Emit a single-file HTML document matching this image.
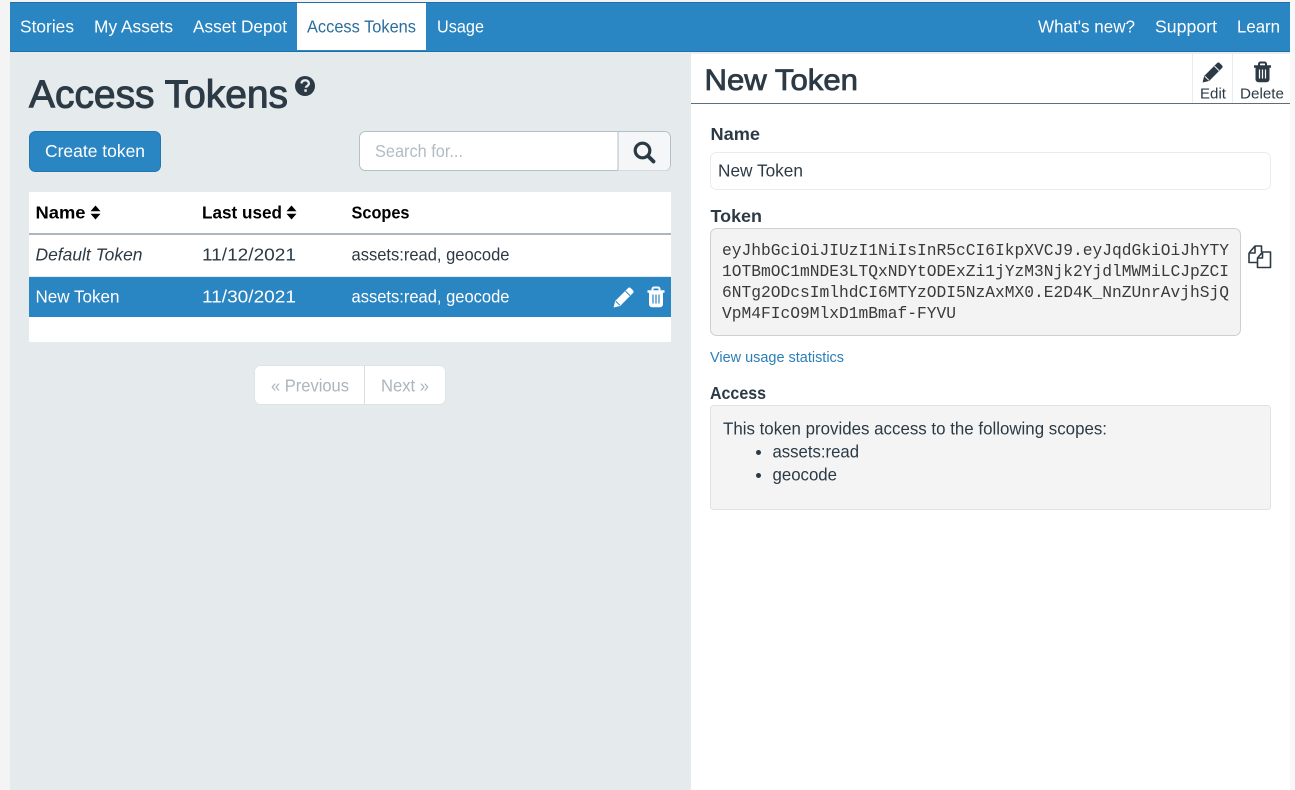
<!DOCTYPE html>
<html lang="en">
<head>
<meta charset="utf-8">
<title>Access Tokens</title>
<style>
html,body{margin:0;padding:0;width:1295px;height:790px;overflow:hidden;background:#f4f4f4}
svg{display:block}
text{font-family:"Liberation Sans",sans-serif;font-size:17.5px;fill:#2c3a45}
.n{fill:#fff}
.h{font-weight:bold;fill:#000}
.l{font-weight:bold;fill:#2c3a45;stroke:none}
.m{font-family:"Liberation Mono",monospace;font-size:16.25px;fill:#3a3a3a}
</style>
</head>
<body>
<svg width="1295" height="790" viewBox="0 0 1295 790" xmlns="http://www.w3.org/2000/svg">
<defs>
<g id="pencil"><path d="M1 23l1.600-6.600L16.400 2.600a2 2 0 0 1 2.800 0l2.200 2.200a2 2 0 0 1 0 2.800L7.600 21.400z"/></g>
<g id="sort"><path d="M5.500 0l5 5.800H.5zM.5 8.200h10l-5 5.800z"/></g>
</defs>

<!-- backgrounds -->
<rect x="0" y="0" width="1295" height="790" fill="#f4f4f4"/>
<rect x="10" y="52" width="681" height="738" fill="#e5eaed"/>
<rect x="691" y="52" width="599" height="738" fill="#fff"/>
<rect x="691" y="52" width="599" height="2" fill="#e9edef"/>
<rect x="1290" y="0" width="5" height="790" fill="#f8f8f8"/>

<!-- nav -->
<rect x="10" y="2" width="1280" height="50" fill="#2a85c3"/>
<rect x="10" y="2" width="1280" height="1" fill="#1f6fa8"/>
<rect x="10" y="51" width="1280" height="1" fill="#1f6fa8"/>
<rect x="297" y="3" width="129" height="47" fill="#fff"/>
<text class="n" x="20" y="32.500" textLength="54" lengthAdjust="spacingAndGlyphs">Stories</text>
<text class="n" x="94" y="32.500" textLength="79" lengthAdjust="spacingAndGlyphs">My Assets</text>
<text class="n" x="193" y="32.500" textLength="94" lengthAdjust="spacingAndGlyphs">Asset Depot</text>
<text x="307" y="32.500" textLength="109" lengthAdjust="spacingAndGlyphs" style="fill:#2a6d9c">Access Tokens</text>
<text class="n" x="437" y="32.500" textLength="47" lengthAdjust="spacingAndGlyphs">Usage</text>
<text class="n" x="1038" y="32.500" textLength="97" lengthAdjust="spacingAndGlyphs">What's new?</text>
<text class="n" x="1155" y="32.500" textLength="62" lengthAdjust="spacingAndGlyphs">Support</text>
<text class="n" x="1237" y="32.500" textLength="43" lengthAdjust="spacingAndGlyphs">Learn</text>

<!-- left heading -->
<text x="29" y="107.500" textLength="259" lengthAdjust="spacingAndGlyphs" style="font-size:39px;stroke:#2c3a45;stroke-width:1">Access Tokens</text>
<circle cx="305" cy="86" r="10" fill="#2c3a45"/>
<path d="M301.400 83.400c.3-2 1.800-3.100 3.800-3.100s3.700 1.300 3.700 3.100c0 2.700-3 2.500-3 4.400" fill="none" stroke="#e5eaed" stroke-width="2.300"/>
<rect x="304.300" y="89.300" width="2.500" height="2.500" fill="#e5eaed"/>

<!-- create button -->
<rect x="29.500" y="131.500" width="131" height="40" rx="6" fill="#2a85c3" stroke="#2476ae"/>
<text class="n" x="45" y="157" textLength="100" lengthAdjust="spacingAndGlyphs">Create token</text>

<!-- search -->
<rect x="359.500" y="131.500" width="311" height="39" rx="6" fill="#fff" stroke="#b4bfc6"/>
<path d="M618 132h46.500a5.500 5.500 0 0 1 5.500 5.500v27.500a5.500 5.500 0 0 1-5.500 5.500H618z" fill="#f4f6f7"/>
<rect x="617.500" y="132" width="1" height="38" fill="#b4bfc6"/>
<text x="375" y="157" textLength="88" lengthAdjust="spacingAndGlyphs" style="fill:#b2bcc4">Search for...</text>
<circle cx="642.500" cy="150.500" r="7.300" fill="none" stroke="#2c3a45" stroke-width="3.200"/>
<path d="M648 156l5.500 5.500" stroke="#2c3a45" stroke-width="3.800" stroke-linecap="round"/>

<!-- table -->
<rect x="29" y="192" width="642" height="150" fill="#fff"/>
<rect x="29" y="233" width="642" height="2" fill="#aeb7bf"/>
<text class="h" x="35.500" y="218.500" textLength="50" lengthAdjust="spacingAndGlyphs">Name</text>
<use href="#sort" x="90" y="205.500" fill="#000"/>
<text class="h" x="202" y="218.500" textLength="80" lengthAdjust="spacingAndGlyphs">Last used</text>
<use href="#sort" x="286" y="205.500" fill="#000"/>
<text class="h" x="351.500" y="218.500" textLength="58" lengthAdjust="spacingAndGlyphs">Scopes</text>

<text x="35.500" y="260.500" textLength="107" lengthAdjust="spacingAndGlyphs" style="font-style:italic">Default Token</text>
<text x="202" y="260.500" textLength="94" lengthAdjust="spacingAndGlyphs">11/12/2021</text>
<text x="351.500" y="260.500" textLength="158" lengthAdjust="spacingAndGlyphs">assets:read, geocode</text>

<rect x="29" y="276" width="642" height="1" fill="#e4ecef"/>
<rect x="29" y="277" width="642" height="40" fill="#2a85c3"/>
<text class="n" x="35.500" y="302.500" textLength="84" lengthAdjust="spacingAndGlyphs">New Token</text>
<text class="n" x="202" y="302.500" textLength="94" lengthAdjust="spacingAndGlyphs">11/30/2021</text>
<text class="n" x="351.500" y="302.500" textLength="158" lengthAdjust="spacingAndGlyphs">assets:read, geocode</text>

<!-- row pencil -->
<g transform="translate(613 286) scale(.92)">
<use href="#pencil" fill="#fff" stroke="#fff" stroke-width=".6"/>
<path d="M13.500 5.500l5 5M3 16.500l4.500 4.500" stroke="#2a85c3" stroke-width="1.100" fill="none"/>
</g>
<!-- row trash -->
<g transform="translate(647.500 287)">
<path d="M0 3.200h17v2.500H15.500v11.500a3 3 0 0 1-3 3h-8a3 3 0 0 1-3-3V5.700H0z" fill="#fff"/>
<path d="M5 3.500V2a1.500 1.500 0 0 1 1.500-1.500h4A1.500 1.500 0 0 1 12 2v1.500" fill="none" stroke="#fff" stroke-width="2"/>
<path d="M5.500 7.500v9M8.500 7.500v9M11.500 7.500v9" stroke="#2a85c3" stroke-width="1.200"/>
</g>

<!-- pagination -->
<rect x="254.500" y="365.500" width="191" height="39" rx="6" fill="#fff" stroke="#dfe4e7"/>
<rect x="364" y="365" width="1" height="40" fill="#d8dde0"/>
<text x="271" y="391.500" textLength="78" lengthAdjust="spacingAndGlyphs" style="fill:#aab5bd">« Previous</text>
<text x="381" y="391.500" textLength="48" lengthAdjust="spacingAndGlyphs" style="fill:#aab5bd">Next »</text>

<!-- right header -->
<rect x="691" y="54" width="599" height="49" fill="#fff"/>
<rect x="691" y="103" width="599" height="1" fill="#5d6d7a"/>
<text x="704.500" y="90" textLength="153.500" lengthAdjust="spacingAndGlyphs" style="font-size:30px;stroke:#2c3a45;stroke-width:.8">New Token</text>
<rect x="1192" y="54" width="1" height="49" fill="#e9ecee"/>
<rect x="1232" y="54" width="1" height="49" fill="#e9ecee"/>
<g transform="translate(1202 61) scale(.92)">
<use href="#pencil" fill="#2c3a45" stroke="#2c3a45" stroke-width=".6"/>
<path d="M13.500 5.500l5 5M3 16.500l4.500 4.500" stroke="#fff" stroke-width="1.100" fill="none"/>
</g>
<text x="1200" y="98.500" textLength="26" lengthAdjust="spacingAndGlyphs" style="font-size:14.500px">Edit</text>
<g transform="translate(1254 62)">
<path d="M0 3.200h17v2.500H15.500v11.500a3 3 0 0 1-3 3h-8a3 3 0 0 1-3-3V5.700H0z" fill="#2c3a45"/>
<path d="M5 3.500V2a1.500 1.500 0 0 1 1.500-1.500h4A1.500 1.500 0 0 1 12 2v1.500" fill="none" stroke="#2c3a45" stroke-width="2"/>
<path d="M5.500 7.500v9M8.500 7.500v9M11.500 7.500v9" stroke="#fff" stroke-width="1.200"/>
</g>
<text x="1240" y="98.500" textLength="44" lengthAdjust="spacingAndGlyphs" style="font-size:14.500px">Delete</text>

<!-- form -->
<text class="l" x="710.500" y="140" textLength="49.500" lengthAdjust="spacingAndGlyphs">Name</text>
<rect x="710.500" y="152.500" width="560" height="37" rx="6" fill="#fff" stroke="#e9ecee"/>
<text x="718" y="176.500" textLength="85" lengthAdjust="spacingAndGlyphs">New Token</text>

<text class="l" x="710.500" y="222" textLength="51.500" lengthAdjust="spacingAndGlyphs">Token</text>
<rect x="710.500" y="228.500" width="530" height="107" rx="6" fill="#f3f3f3" stroke="#cfcfcf"/>
<text class="m" x="722" y="255" textLength="507" lengthAdjust="spacingAndGlyphs">eyJhbGciOiJIUzI1NiIsInR5cCI6IkpXVCJ9.eyJqdGkiOiJhYTY</text>
<text class="m" x="722" y="276" textLength="507" lengthAdjust="spacingAndGlyphs">1OTBmOC1mNDE3LTQxNDYtODExZi1jYzM3Njk2YjdlMWMiLCJpZCI</text>
<text class="m" x="722" y="297" textLength="507" lengthAdjust="spacingAndGlyphs">6NTg2ODcsImlhdCI6MTYzODI5NzAxMX0.E2D4K_NnZUnrAvjhSjQ</text>
<text class="m" x="722" y="318" textLength="234" lengthAdjust="spacingAndGlyphs">VpM4FIcO9MlxD1mBmaf-FYVU</text>

<!-- copy icon -->
<g fill="none" stroke="#2c3a45" stroke-width="1.600" stroke-linejoin="round">
<path d="M1249 253l6-7h6.500v6M1249 253v9.500h8M1255 246v7h-6"/>
<path d="M1257.500 258l5-6h8v15.500h-13zM1262.500 252v6h-5" fill="#fff"/>
</g>

<text x="710" y="362" textLength="134" lengthAdjust="spacingAndGlyphs" style="font-size:14.500px;fill:#2a7fb8">View usage statistics</text>

<text class="l" x="710" y="399" textLength="56" lengthAdjust="spacingAndGlyphs">Access</text>
<rect x="710.500" y="405.500" width="560" height="104" rx="3" fill="#f4f4f4" stroke="#e2e2e2"/>
<text x="723" y="434.500" textLength="384" lengthAdjust="spacingAndGlyphs">This token provides access to the following scopes:</text>
<circle cx="758.500" cy="452.500" r="2.500" fill="#2c3a45"/>
<text x="772.500" y="457.500" textLength="86.500" lengthAdjust="spacingAndGlyphs">assets:read</text>
<circle cx="758.500" cy="475.500" r="2.500" fill="#2c3a45"/>
<text x="772.500" y="480.500" textLength="64.500" lengthAdjust="spacingAndGlyphs">geocode</text>
</svg>
</body>
</html>
